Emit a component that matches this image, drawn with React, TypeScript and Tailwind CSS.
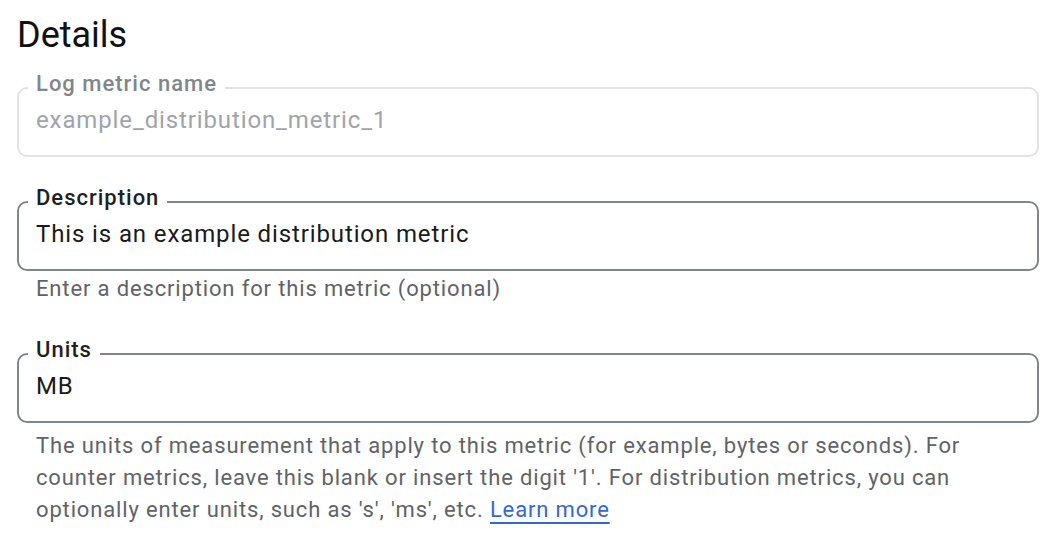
import React from "react";

interface OutlinedFieldProps {
    label: string;
    value: string;
    disabled?: boolean;
    className?: string;
}

const OutlinedField = ({ label, value, disabled, className }: OutlinedFieldProps) => (
    <fieldset
        className={`rounded-[10px] border-2 ${disabled ? "border-[#e3e3e3]" : "border-[#80868b]"} ${className ?? ""}`}
    >
        <legend
            className={`ml-[9px] px-[8px] pb-2 text-[22px] leading-[20px] font-medium tracking-[1px] ${
                disabled ? "text-[#80868b]" : "text-[#1f1f1f]"
            }`}
        >
            {label}
        </legend>
        <div
            className={`pl-[17px] pt-1 pb-[21px] text-[24px] leading-[28px] tracking-[0.88px] ${
                disabled ? "text-[#a0a4a8]" : "text-[#1a1a1a]"
            }`}
        >
            {value}
        </div>
    </fieldset>
);

export default function App() {
    return (
        <div className="min-h-screen bg-white pt-[15px] pl-[17px] pr-[21px] font-['Roboto',sans-serif]">
            <h2 className="text-[36px] leading-[40px] font-normal text-[#111111]">Details</h2>

            <OutlinedField
                className="mt-[19px]"
                label="Log metric name"
                value="example_distribution_metric_1"
                disabled
            />

            <OutlinedField className="mt-[31px]" label="Description" value="This is an example distribution metric" />
            <p className="mt-[2px] pl-[19px] text-[22px] leading-[32px] tracking-[0.85px] text-[#5f6368]">
                Enter a description for this metric (optional)
            </p>

            <OutlinedField className="mt-[35px]" label="Units" value="MB" />
            <p className="mt-[7px] pl-[19px] text-[22px] leading-[32px] tracking-[0.85px] text-[#5f6368]">
                The units of measurement that apply to this metric (for example, bytes or seconds). For
                <br />
                counter metrics, leave this blank or insert the digit '1'. For distribution metrics, you can
                <br />
                optionally enter units, such as 's', 'ms', etc.{" "}
                <a href="#" className="text-[#3367d6] underline decoration-2 underline-offset-[5px]">
                    Learn more
                </a>
            </p>
        </div>
    );
}
